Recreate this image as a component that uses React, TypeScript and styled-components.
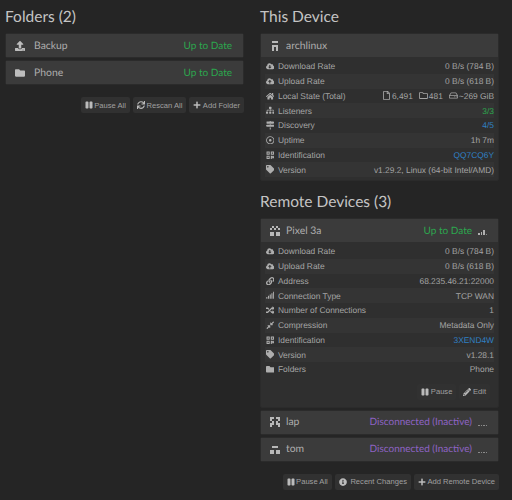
import React from 'react';
import styled, { createGlobalStyle } from 'styled-components';
import {
  FaUpload,
  FaFolder,
  FaRegFolder,
  FaPause,
  FaSync,
  FaPlus,
  FaCloudDownloadAlt,
  FaCloudUploadAlt,
  FaHome,
  FaRegFile,
  FaRegHdd,
  FaSitemap,
  FaMapSigns,
  FaRegDotCircle,
  FaQrcode,
  FaTag,
  FaLink,
  FaSignal,
  FaRandom,
  FaCompressAlt,
  FaPencilAlt,
  FaInfoCircle,
} from 'react-icons/fa';

const GlobalStyle = createGlobalStyle`
  html, body {
    margin: 0;
    padding: 0;
    background: #252525;
  }
  * {
    box-sizing: border-box;
  }
`;

const Page = styled.div`
  width: 512px;
  height: 500px;
  overflow: hidden;
  padding: 0 13px 0 5px;
  display: grid;
  grid-template-columns: 239px 239px;
  column-gap: 16px;
  align-items: start;
  background: #252525;
  font-family: 'Liberation Sans', Arial, sans-serif;
  text-rendering: geometricPrecision;
  color: #aaaaaa;
`;

const Column = styled.div`
  display: flex;
  flex-direction: column;
`;

const Heading = styled.h3<{ $top?: number }>`
  margin: ${(p) => p.$top ?? 7}px 0 5px;
  height: 21px;
  font-family: Lato, 'Open Sans', sans-serif;
  font-size: 15.5px;
  line-height: 21px;
  font-weight: 400;
  color: #c4c4c4;
`;

const Panel = styled.div`
  background: #2f2f2f;
  border: 1px solid #2b2b2b;
  border-radius: 2px;
  margin-bottom: 2px;
`;

const PanelHead = styled.div`
  height: 23px;
  display: flex;
  align-items: center;
  padding: 0 11px 0 8px;
  background: #3b3b3b;
  font-family: Lato, 'Open Sans', sans-serif;
  font-size: 10px;
  color: #acacac;
`;

const HeadIcon = styled.span<{ $gap?: number }>`
  width: 11px;
  display: flex;
  justify-content: center;
  margin-right: ${(p) => p.$gap ?? 9}px;
  color: #bdbdbd;
  font-size: 10px;
`;

const HeadName = styled.span`
  flex: 1;
  font-size: 10.4px;
`;

const Status = styled.span<{ $color: string }>`
  color: ${(p) => p.$color};
`;

const SignalGlyph = styled.span`
  margin: 2px -1px 0 6px;
  display: flex;
  align-items: flex-end;
`;

const PanelBody = styled.div<{ $bottom?: number }>`
  padding: 2px 4px ${(p) => p.$bottom ?? 3}px;
`;

const Row = styled.div`
  height: 14.75px;
  display: flex;
  align-items: center;
  justify-content: space-between;
  font-size: 8.4px;
  color: #a4a4a4;

  &:nth-child(even) {
    background: #343434;
  }
`;

const RowLabel = styled.span`
  display: flex;
  align-items: center;
  white-space: nowrap;
`;

const RowIcon = styled.span`
  width: 10px;
  margin-right: 3px;
  display: flex;
  justify-content: center;
  font-size: 8.5px;
  color: #aeaeae;
`;

const RowValue = styled.span<{ $color?: string }>`
  display: flex;
  align-items: center;
  white-space: nowrap;
  color: ${(p) => p.$color ?? '#a4a4a4'};
`;

const Stat = styled.span`
  display: inline-flex;
  align-items: center;
  gap: 1px;
  margin-left: 6px;

  svg {
    font-size: 9px;
  }
`;

const Toolbar = styled.div<{ $top: number; $inset?: number }>`
  display: flex;
  justify-content: flex-end;
  gap: 3px;
  margin-top: ${(p) => p.$top}px;
  padding-right: ${(p) => p.$inset ?? 0}px;
`;

const Button = styled.button`
  height: 16px;
  display: inline-flex;
  align-items: center;
  gap: 1.5px;
  padding: 0 4px;
  background: #313131;
  border: 0;
  border-radius: 2px;
  font-family: 'Liberation Sans', Arial, sans-serif;
  font-size: 7.6px;
  color: #a0a0a0;
  white-space: nowrap;

  svg {
    font-size: 8px;
    color: #bbbbbb;
  }
`;

const PURPLE = '#8e63c4';
const GREEN = '#2ca84e';
const BLUE = '#2f80c4';

const Identicon = ({ cells }: { cells: string[] }) => (
  <svg width="10" height="10" viewBox="0 0 5 5" shapeRendering="crispEdges">
    {cells.flatMap((line, y) =>
      line.split('').map((c, x) => (c === '#' ? <rect key={`${x}-${y}`} x={x} y={y} width="1" height="1" fill="#b8b8b8" /> : null))
    )}
  </svg>
);

const ARCH = ['.###.', '.....', '.###.', '.#.#.', '.#.#.'];
const PIXEL = ['.#.#.', '#.#.#', '.....', '##.##', '##.##'];
const LAP = ['##.##', '#...#', '.#.#.', '##.##', '#...#'];
const TOM = ['.....', '.###.', '.....', '##.##', '##.##'];

const Bars = ({ active }: { active: number }) => (
  <svg width="10" height="6" viewBox="0 0 10 6" shapeRendering="crispEdges">
    {[2, 3, 5, 6].map((h, i) => {
      const on = i < active;
      return <rect key={h} x={i * 2.5} y={on ? 6 - h : 5} width="1.6" height={on ? h : 1} fill={on ? '#b0b0b0' : '#8a8a8a'} />;
    })}
  </svg>
);

const Info = ({ icon, label, children, color }: { icon: React.ReactNode; label: string; children: React.ReactNode; color?: string }) => (
  <Row>
    <RowLabel>
      <RowIcon>{icon}</RowIcon>
      {label}
    </RowLabel>
    <RowValue $color={color}>{children}</RowValue>
  </Row>
);

export default function App() {
  return (
    <>
      <GlobalStyle />
      <Page>
        <Column>
          <Heading>Folders (2)</Heading>
          <Panel>
            <PanelHead>
              <HeadIcon><FaUpload /></HeadIcon>
              <HeadName>Backup</HeadName>
              <Status $color={GREEN}>Up to Date</Status>
            </PanelHead>
          </Panel>
          <Panel>
            <PanelHead>
              <HeadIcon><FaFolder /></HeadIcon>
              <HeadName>Phone</HeadName>
              <Status $color={GREEN}>Up to Date</Status>
            </PanelHead>
          </Panel>
          <Toolbar $top={10}>
            <Button><FaPause />Pause All</Button>
            <Button><FaSync />Rescan All</Button>
            <Button><FaPlus />Add Folder</Button>
          </Toolbar>
        </Column>
        <Column>
          <Heading>This Device</Heading>
          <Panel>
            <PanelHead>
              <HeadIcon $gap={6}><Identicon cells={ARCH} /></HeadIcon>
              <HeadName>archlinux</HeadName>
            </PanelHead>
            <PanelBody>
              <Info icon={<FaCloudDownloadAlt />} label="Download Rate">0 B/s (784 B)</Info>
              <Info icon={<FaCloudUploadAlt />} label="Upload Rate">0 B/s (618 B)</Info>
              <Info icon={<FaHome />} label="Local State (Total)">
                <Stat><FaRegFile />6,491</Stat>
                <Stat><FaRegFolder />481</Stat>
                <Stat><FaRegHdd />~269 GiB</Stat>
              </Info>
              <Info icon={<FaSitemap />} label="Listeners" color={GREEN}>3/3</Info>
              <Info icon={<FaMapSigns />} label="Discovery" color={BLUE}>4/5</Info>
              <Info icon={<FaRegDotCircle />} label="Uptime">1h 7m</Info>
              <Info icon={<FaQrcode />} label="Identification" color={BLUE}>QQ7CQ6Y</Info>
              <Info icon={<FaTag />} label="Version">v1.29.2, Linux (64-bit Intel/AMD)</Info>
            </PanelBody>
          </Panel>
          <Heading $top={9}>Remote Devices (3)</Heading>
          <Panel>
            <PanelHead>
              <HeadIcon $gap={6}><Identicon cells={PIXEL} /></HeadIcon>
              <HeadName>Pixel 3a</HeadName>
              <Status $color={GREEN}>Up to Date</Status>
              <SignalGlyph><Bars active={3} /></SignalGlyph>
            </PanelHead>
            <PanelBody $bottom={7}>
              <Info icon={<FaCloudDownloadAlt />} label="Download Rate">0 B/s (784 B)</Info>
              <Info icon={<FaCloudUploadAlt />} label="Upload Rate">0 B/s (618 B)</Info>
              <Info icon={<FaLink />} label="Address">68.235.46.21:22000</Info>
              <Info icon={<FaSignal />} label="Connection Type">TCP WAN</Info>
              <Info icon={<FaRandom />} label="Number of Connections">1</Info>
              <Info icon={<FaCompressAlt />} label="Compression">Metadata Only</Info>
              <Info icon={<FaQrcode />} label="Identification" color={BLUE}>3XEND4W</Info>
              <Info icon={<FaTag />} label="Version">v1.28.1</Info>
              <Info icon={<FaFolder />} label="Folders">Phone</Info>
              <Toolbar $top={7} $inset={4}>
                <Button><FaPause />Pause</Button>
                <Button><FaPencilAlt />Edit</Button>
              </Toolbar>
            </PanelBody>
          </Panel>
          <Panel>
            <PanelHead>
              <HeadIcon $gap={6}><Identicon cells={LAP} /></HeadIcon>
              <HeadName>lap</HeadName>
              <Status $color={PURPLE}>Disconnected (Inactive)</Status>
              <SignalGlyph><Bars active={0} /></SignalGlyph>
            </PanelHead>
          </Panel>
          <Panel>
            <PanelHead>
              <HeadIcon $gap={6}><Identicon cells={TOM} /></HeadIcon>
              <HeadName>tom</HeadName>
              <Status $color={PURPLE}>Disconnected (Inactive)</Status>
              <SignalGlyph><Bars active={0} /></SignalGlyph>
            </PanelHead>
          </Panel>
          <Toolbar $top={10}>
            <Button><FaPause />Pause All</Button>
            <Button><FaInfoCircle />&nbsp;Recent Changes</Button>
            <Button><FaPlus />Add Remote Device</Button>
          </Toolbar>
        </Column>
      </Page>
    </>
  );
}
